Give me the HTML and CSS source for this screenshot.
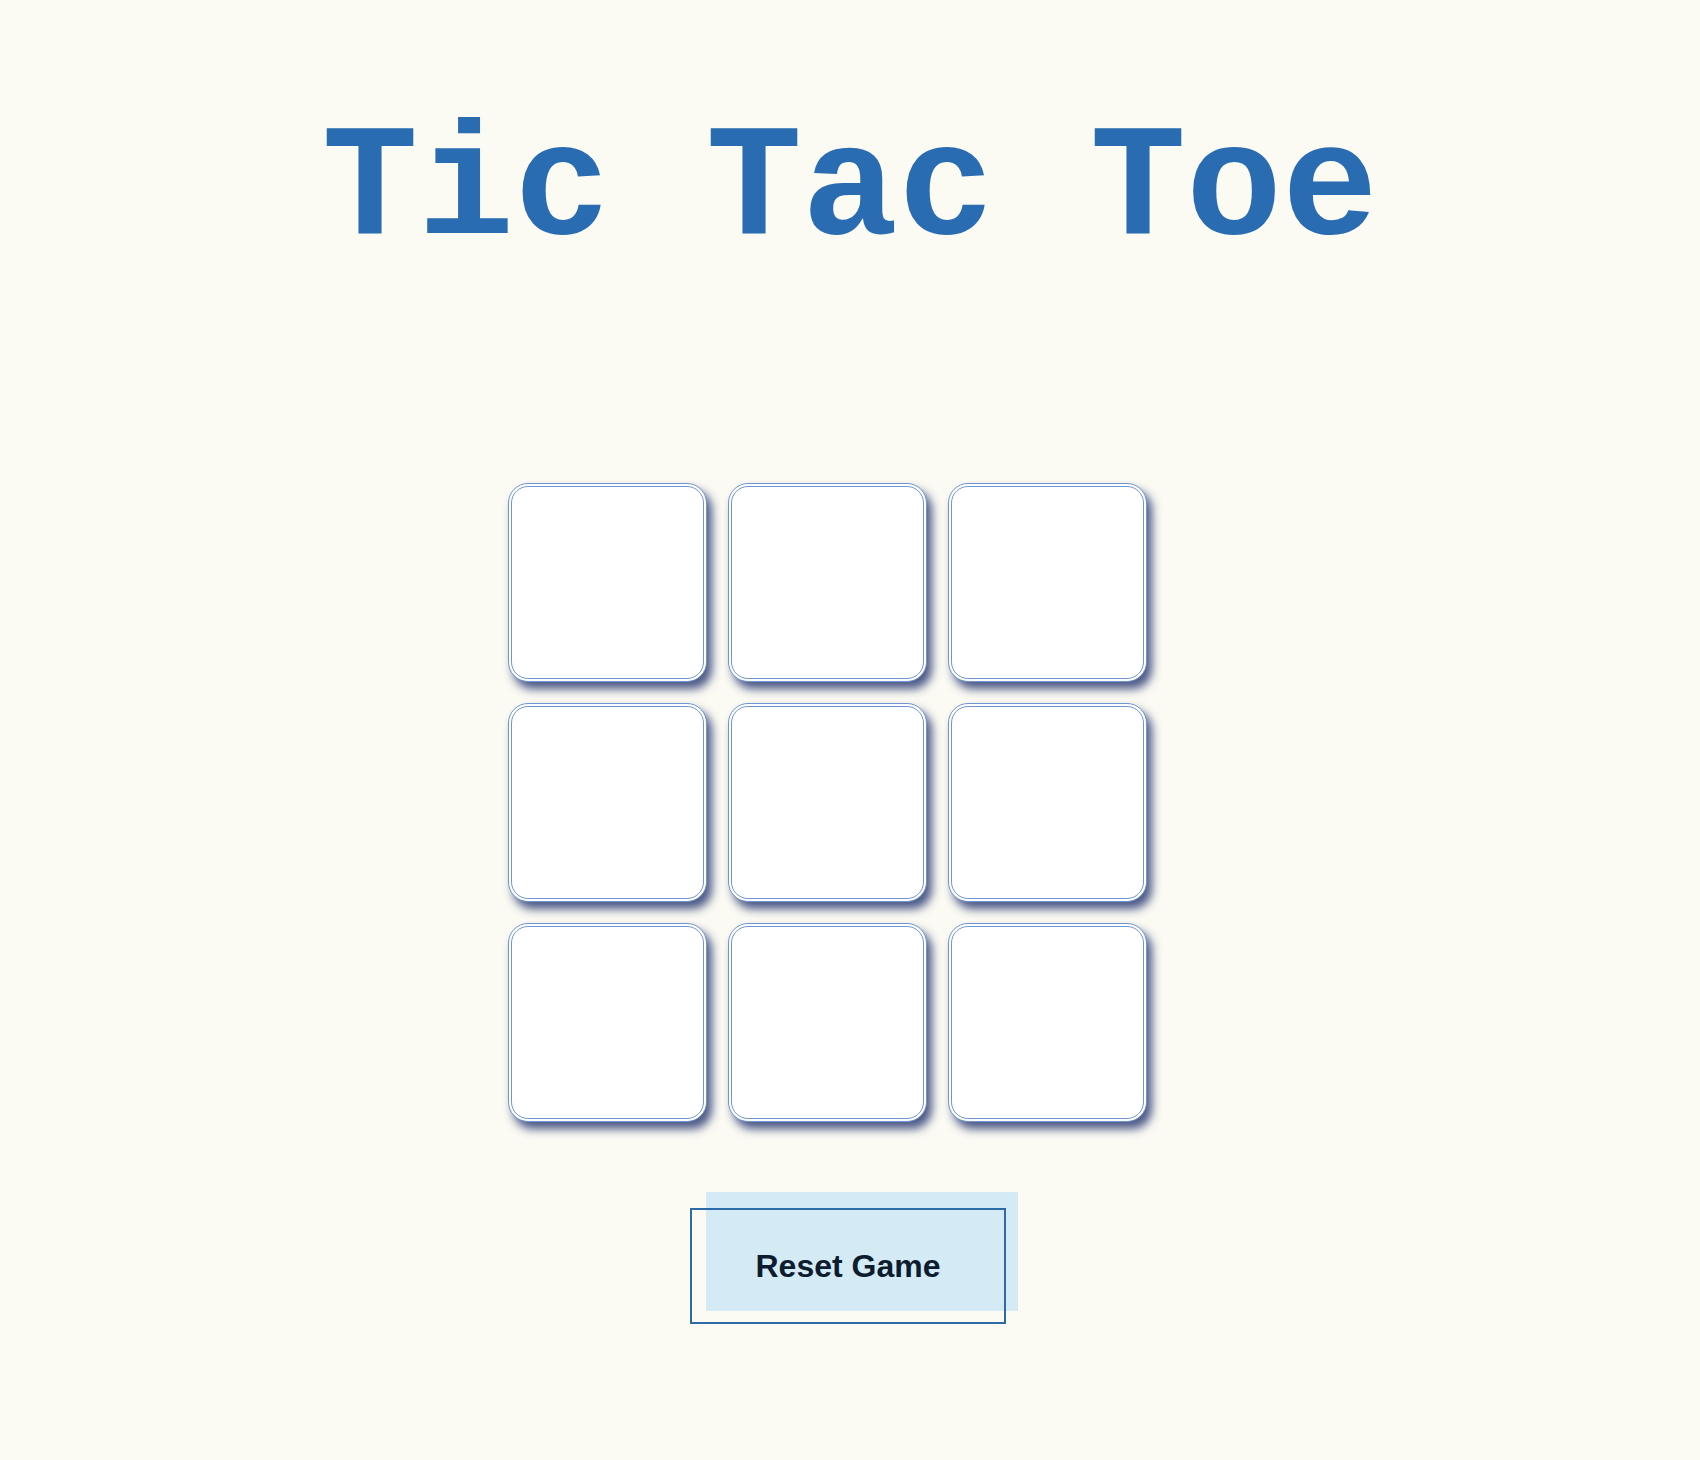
FILE: index.html
```html
<!DOCTYPE html>
<html lang="en">
<head>
<meta charset="utf-8">
<title>Tic Tac Toe</title>
<link rel="stylesheet" href="styles.css">
</head>
<body>
<main class="game">
  <h1 class="title">Tic Tac Toe</h1>
  <div class="board">
    <div class="cell"></div>
    <div class="cell"></div>
    <div class="cell"></div>
    <div class="cell"></div>
    <div class="cell"></div>
    <div class="cell"></div>
    <div class="cell"></div>
    <div class="cell"></div>
    <div class="cell"></div>
  </div>
  <div class="controls">
    <button class="reset" type="button"><span class="reset-label">Reset Game</span></button>
  </div>
</main>
</body>
</html>
```

FILE: styles.css
```css
html, body {
  margin: 0;
  padding: 0;
  background: #fbfaf3;
}

body {
  width: 1700px;
  height: 1460px;
  overflow: hidden;
}

.game {
  display: flex;
  flex-direction: column;
}

.title {
  margin: 100px 0 0;
  font-family: "Liberation Mono", "Courier New", monospace;
  font-weight: bold;
  font-size: 160px;
  line-height: normal;
  color: #2a6cb2;
  text-align: center;
  white-space: pre;
}

.board {
  margin: 202px 0 0 508px;
  display: grid;
  grid-template-columns: repeat(3, 199px);
  grid-auto-rows: 199px;
  gap: 21px;
  width: 639px;
}

.cell {
  box-sizing: border-box;
  background: #ffffff;
  border: 4px double #6f96d2;
  border-radius: 20px;
  box-shadow: 5px 7px 10px rgba(30, 48, 108, 0.8);
}

.controls {
  margin: 86px 0 0 690px;
  display: flex;
}

.reset {
  position: relative;
  z-index: 0;
  box-sizing: border-box;
  width: 316px;
  height: 116px;
  border: none;
  background: transparent;
  font-family: "Liberation Sans", Arial, sans-serif;
  font-weight: bold;
  font-size: 32px;
  color: #0e1c30;
  padding: 0;
  cursor: pointer;
}

.reset::before {
  content: "";
  position: absolute;
  z-index: -1;
  left: 16px;
  top: -16px;
  width: 312px;
  height: 119px;
  background: #d4ebf6;
}

.reset::after {
  content: "";
  position: absolute;
  z-index: 1;
  inset: 0;
  border: 2px solid #2c6aa8;
}

.reset-label {
  position: relative;
  z-index: 2;
}
```
